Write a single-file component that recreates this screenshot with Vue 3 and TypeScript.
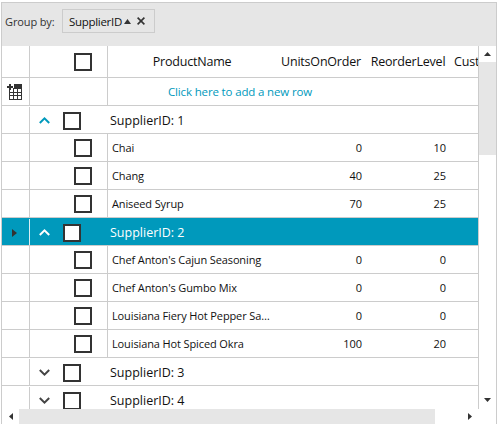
<script setup lang="ts">
interface Row { name: string; units: number; level: number }
interface Group { id: number; open: boolean; selected?: boolean; rows: Row[] }

const groups: Group[] = [
  { id: 1, open: true, rows: [
    { name: 'Chai', units: 0, level: 10 },
    { name: 'Chang', units: 40, level: 25 },
    { name: 'Aniseed Syrup', units: 70, level: 25 },
  ] },
  { id: 2, open: true, selected: true, rows: [
    { name: "Chef Anton's Cajun Seasoning", units: 0, level: 0 },
    { name: "Chef Anton's Gumbo Mix", units: 0, level: 0 },
    { name: 'Louisiana Fiery Hot Pepper Sauce', units: 0, level: 0 },
    { name: 'Louisiana Hot Spiced Okra', units: 100, level: 20 },
  ] },
  { id: 3, open: false, rows: [] },
  { id: 4, open: false, rows: [] },
]
</script>

<template>
  <div class="grid">
    <div class="panel">
      <span class="panel-label">Group by:</span>
      <span class="chip">
        <span class="chip-text">SupplierID</span>
        <svg class="chip-sort" width="7" height="5" viewBox="0 0 7 5"><path d="M0 5 3.5 0 7 5z" fill="#333" /></svg>
        <svg class="chip-x" width="8" height="8" viewBox="0 0 8 8"><path d="M.6.6 7.4 7.4M7.4.6.6 7.4" stroke="#333" stroke-width="1.6" fill="none" /></svg>
      </span>
    </div>
    <div class="middle">
      <div class="rows">
        <div class="row header">
          <div class="ind"></div>
          <div class="chk"><span class="box"></span></div>
          <div class="c-name centered">ProductName</div>
          <div class="c-units centered">UnitsOnOrder</div>
          <div class="c-level centered">ReorderLevel</div>
          <div class="c-cust">CustomerID</div>
        </div>
        <div class="row newrow">
          <div class="ind">
            <svg width="15" height="16" viewBox="0 0 15 16" shape-rendering="crispEdges">
              <path d="M2 0h2v2h2v2H4v2H2V4H0V2h2z" fill="#333" />
              <path d="M7 0h8v4H7z" fill="#333" />
              <path d="M2.5 6v9.5h12V4M6.5 4.5v11M10.5 4.5v11M2.5 8.5h12M2.5 11.5h12M6 4.5h9" stroke="#333" fill="none" />
            </svg>
          </div>
          <div class="chk"></div>
          <div class="add">Click here to add a new row</div>
        </div>
        <template v-for="g in groups" :key="g.id">
          <div class="row group" :class="{ selected: g.selected }">
            <div class="ind">
              <svg v-if="g.selected" class="ind-arrow" width="5" height="8" viewBox="0 0 5 8"><path d="M0 0 5 4 0 8z" fill="#333" /></svg>
            </div>
            <div class="group-main">
              <svg class="chev" :class="{ open: g.open }" width="11" height="7" viewBox="0 0 11 7">
                <path v-if="g.open" d="M.8 6 5.5 1.4 10.2 6" fill="none" stroke-width="2" />
                <path v-else d="M.8 1 5.5 5.6 10.2 1" fill="none" stroke-width="2" />
              </svg>
              <span class="box"></span>
              <span class="group-title">SupplierID: {{ g.id }}</span>
            </div>
          </div>
          <div v-for="r in g.rows" :key="r.name" class="row data">
            <div class="ind"></div>
            <div class="chk"><span class="box"></span></div>
            <div class="c-name cell">{{ r.name }}</div>
            <div class="c-units num">{{ r.units }}</div>
            <div class="c-level num">{{ r.level }}</div>
          </div>
        </template>
      </div>
      <div class="vbar">
        <div class="vbtn"><svg width="7" height="4" viewBox="0 0 7 4"><path d="M0 4 3.5 0 7 4z" fill="#333" /></svg></div>
        <div class="vthumb"></div>
        <div class="vspace"></div>
        <div class="vbtn down"><svg width="7" height="4" viewBox="0 0 7 4"><path d="M0 0 3.5 4 7 0z" fill="#333" /></svg></div>
      </div>
    </div>
    <div class="hbar">
      <div class="hbtn"><svg width="4" height="7" viewBox="0 0 4 7"><path d="M4 0 0 3.5 4 7z" fill="#333" /></svg></div>
      <div class="hthumb"></div>
      <div class="hspace"></div>
      <div class="hbtn right"><svg width="4" height="7" viewBox="0 0 4 7"><path d="M0 0 4 3.5 0 7z" fill="#333" /></svg></div>
    </div>
  </div>
</template>

<style>
html, body { margin: 0; background: #fff; }
</style>

<style scoped>
.grid {
  box-sizing: border-box;
  width: 496px;
  height: 422px;
  margin: 2px 0 0 1px;
  border-top: 1px solid #ccc;
  border-left: 1px solid #ccc;
  border-right: 1px solid #ccc;
  display: flex;
  flex-direction: column;
  overflow: hidden;
  font-family: "Open Sans", "Noto Sans", sans-serif;
  color: #111;
  background: #fff;
}
.panel {
  height: 43px;
  flex: none;
  background: #e6e6e6;
  display: flex;
  align-items: flex-start;
  box-sizing: border-box;
  padding: 6px 0 0 3px;
}
.panel-label { width: 57px; flex: none; font-size: 11px; letter-spacing: -0.12px; line-height: 24px; margin-top: 1px; color: #333; }
.chip {
  box-sizing: border-box;
  width: 93px;
  height: 24px;
  border: 1px solid #ccc;
  display: flex;
  align-items: center;
  padding-left: 6px;
  font-size: 11.5px;
}
.chip-text { width: 54px; flex: none; letter-spacing: -0.3px; }
.chip-sort { margin-left: 1px; }
.chip-x { margin-left: 6px; }
.middle { flex: 1; min-height: 0; display: flex; }
.rows { width: 476px; flex: none; overflow: hidden; }
.row {
  display: flex;
  height: 28px;
  box-sizing: border-box;
  border-bottom: 1px solid #ccc;
  align-items: stretch;
  white-space: nowrap;
}
.row.header { height: 32px; font-size: 12.5px; letter-spacing: -0.2px; }
.ind {
  width: 28px;
  flex: none;
  box-sizing: border-box;
  border-right: 1px solid #ccc;
  display: flex;
  align-items: center;
  justify-content: center;
}
.newrow .ind { justify-content: flex-start; padding: 1px 0 0 5px; }
.group .ind { margin-top: 1px; }
.ind-arrow { margin: 2px 2px 0 0; }
.chk {
  width: 78px;
  flex: none;
  box-sizing: border-box;
  border-right: 1px solid #ccc;
  display: flex;
  align-items: center;
  padding-left: 44px;
}
.box {
  display: block;
  flex: none;
  box-sizing: border-box;
  width: 18px;
  height: 18px;
  border: 2px solid #333;
  background: #fff;
}
.c-name { width: 168px; flex: none; box-sizing: border-box; }
.c-units { width: 90px; flex: none; box-sizing: border-box; }
.c-level { width: 84px; flex: none; box-sizing: border-box; }
.c-cust { flex: none; line-height: 31px; padding-left: 4px; }
.centered { text-align: center; line-height: 31px; }
.cell {
  font-size: 11px;
  letter-spacing: -0.12px;
  line-height: 27px;
  padding: 0 4px 0 4px;
  overflow: hidden;
  text-overflow: ellipsis;
}
.num { font-size: 11px; line-height: 27px; text-align: right; padding-right: 4px; }
.add {
  flex: 1;
  font-size: 11.5px;
  letter-spacing: -0.15px;
  line-height: 27px;
  color: #0099bc;
  padding-left: 60px;
}
.group-main { flex: 1; display: flex; align-items: center; padding-left: 9px; }
.group .box { margin-top: 3px; }
.group-title { font-size: 12.5px; margin: 2px 0 0 29px; }
.chev { margin: 2px 13px 0 0; stroke: #444; }
.chev.open { stroke: #0099bc; }
.selected { background: #0099bc; color: #fff; }
.selected .ind { border-right-color: #d8eef3; }
.selected .chev { stroke: #fff; }
.vbar { flex: 1; box-sizing: border-box; border-left: 1px solid #ccc; display: flex; flex-direction: column; }
.vbtn { height: 16px; flex: none; display: flex; align-items: center; justify-content: center; }
.vbtn.down { margin-bottom: 1px; }
.vthumb { height: 93px; flex: none; background: #e6e6e6; }
.vspace { flex: 1; }
.hbar { height: 15px; flex: none; display: flex; }
.hbtn { width: 17px; flex: none; display: flex; align-items: center; justify-content: center; }
.hbtn.right { width: 20px; margin-right: 16px; }
.hthumb { width: 416px; flex: none; background: #e6e6e6; }
.hspace { flex: 1; }
</style>
